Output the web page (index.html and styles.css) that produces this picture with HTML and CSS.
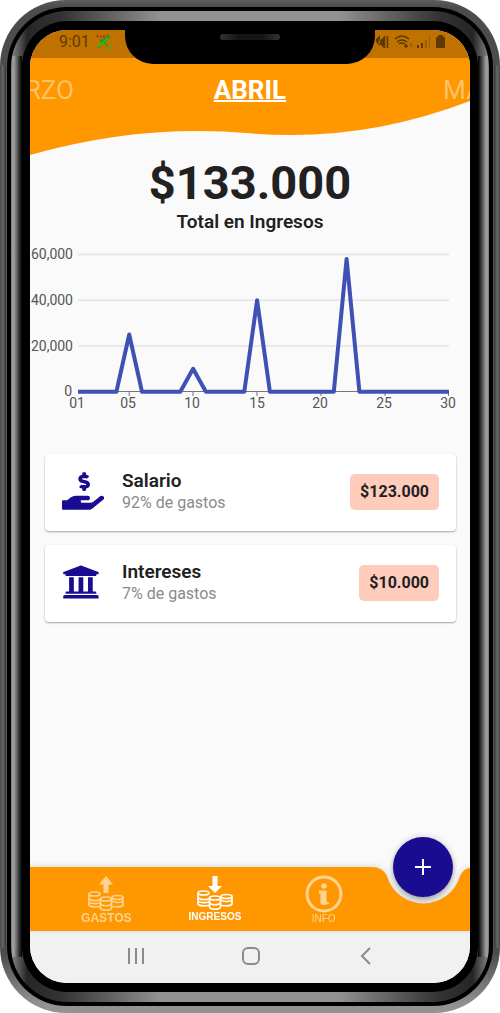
FILE: index.html
```html
<!DOCTYPE html>
<html lang="es">
<head>
<meta charset="utf-8">
<meta name="viewport" content="width=device-width, initial-scale=1">
<title>Ingresos</title>
<link rel="stylesheet" href="styles.css">
</head>
<body>
<div class="phone"><div class="rim"><div class="band"><div class="bezel">
<div class="screen">
  <div class="notch"><span class="speaker"></span></div>
  <header class="header">
    <svg class="wave" viewBox="0 0 440 125" preserveAspectRatio="none" aria-hidden="true">
      <path fill="#ff9800" d="M0 0H440V71Q330 113 220 103.3Q110 93.6 0 125Z"/>
    </svg>
    <div class="header-content">
      <div class="status">
        <span class="clock">9:01</span>
        <svg class="fake-gps" viewBox="0 0 16 16" aria-hidden="true">
          <path d="M1 4V1h2M1 2.500h1.500M4 4l1-3 1 3M7.500 1v3M10 1 8 2.500l2 1.500M13 1h-2v3h2" fill="none" stroke="#b63a12"/>
          <path d="M1 12l3-3 2 2-3 3zM10 4l3-3 2 2-3 3z" fill="#22a322"/>
          <path d="M5 9l5-4" stroke="#18a018" stroke-width="4"/>
          <path d="M4 5l8 7" stroke="#18a018" stroke-width="1.500"/>
          <path d="M5 10l6-5M2 12l3-2" stroke="#3bd04a"/>
          <path d="M10 14q5 0 5-4M11 16q4-1 4-4" fill="none" stroke="#5aa32a"/>
        </svg>
        <span class="status-space"></span>
        <svg class="signals" viewBox="0 0 72 16" aria-hidden="true">
          <g fill="#5e3a00">
            <path d="M0 5l4-4v11L0 8zM2 8l6 6V3zM62 3V1h5v2h2v11h-9V3zM41 11h2v3h-2zM45 9h2v5h-2z"/>
            <path d="M49 6h2v8h-2zM53 2h1v12h-1z" opacity=".35"/>
          </g>
          <g fill="none" stroke="#5e3a00" stroke-width="1.500">
            <path d="M9 2l-1 2 1 2-1 2 1 2-1 2 1 2M12 2l-1 2 1 2-1 2 1 2-1 2 1 2M19 5q7-6 14 0M21 8q5-4 10 0M23 10q3-2 6 0"/>
            <path d="M28 12h4m-2-2v4" />
            <path d="M35 9v4" opacity=".4"/>
          </g>
        </svg>
      </div>
      <nav class="months" aria-label="Mes">
        <a class="month previous" href="#marzo">MARZO</a>
        <a class="month current" href="#abril" aria-current="page">ABRIL</a>
        <a class="month next" href="#mayo">MAYO</a>
      </nav>
    </div>
  </header>

  <main class="content">
    <h1 class="total">$133.000</h1>
    <p class="caption">Total en Ingresos</p>

    <svg class="chart" viewBox="0 0 440 170" role="img" aria-label="Ingresos por día">
      <g stroke="#e3e3e3" stroke-width="1.500">
        <path d="M48 9.500H419M48 55.300H419M48 101H419"/>
      </g>
      <path d="M48 146.500H419M99.200 147v4M163 147v4M227 147v4M291 147v4M355 147v4M418.500 147v4" stroke="#777" fill="none"/>
      <path d="M48 146.700H86.400L99.200 89.500L112 146.700H150.300L163.100 123.800L175.900 146.700H214.300L227.100 55.200L239.900 146.700H303.800L316.600 14L329.400 146.700H419" fill="none" stroke="#3f51b5" stroke-width="4" stroke-linejoin="round"/>
      <g class="axis end">
        <text x="43" y="14">60,000</text><text x="43" y="60">40,000</text><text x="43" y="106">20,000</text><text x="42" y="151">0</text>
      </g>
      <g class="axis middle">
        <text x="47" y="163">01</text><text x="98" y="163">05</text><text x="162" y="163">10</text><text x="227" y="163">15</text><text x="290" y="163">20</text><text x="354" y="163">25</text><text x="418" y="163">30</text>
      </g>
    </svg>

    <ul class="cards">
      <li class="card">
        <svg class="icon" viewBox="0 0 576 512" aria-hidden="true"><path d="M271.060,144.300l54.270,14.300a8.590,8.590,0,0,1,6.630,8.100c0,4.600-4.090,8.400-9.120,8.400h-35.600a30,30,0,0,1-11.190-2.200c-5.240-2.200-11.280-1.700-15.300,2l-19,17.500a11.680,11.680,0,0,0-2.250,2.660,11.420,11.420,0,0,0,3.880,15.740,83.770,83.770,0,0,0,34.510,11.500V240c0,8.800,7.830,16,17.370,16h17.370c9.550,0,17.380-7.200,17.380-16V222.400c32.930-3.600,57.840-31,53.500-63-3.150-23-22.460-41.300-46.560-47.700L282.680,97.400a8.590,8.590,0,0,1-6.630-8.100c0-4.600,4.090-8.400,9.120-8.400h35.600A30,30,0,0,1,332,83.100c5.230,2.200,11.280,1.700,15.300-2l19-17.500A11.310,11.310,0,0,0,368.470,61a11.430,11.430,0,0,0-3.840-15.780,83.820,83.820,0,0,0-34.520-11.500V16c0-8.800-7.820-16-17.370-16H295.370C285.820,0,278,7.200,278,16V33.600c-32.890,3.600-57.850,31-53.510,63C227.630,119.600,247,137.900,271.060,144.300ZM565.270,328.100c-11.800-10.700-30.200-10-42.600,0L430.270,402a63.640,63.640,0,0,1-40,14H272a16,16,0,0,1,0-32h78.290c15.900,0,30.710-10.900,33.250-26.600a31.200,31.200,0,0,0,.46-5.460A32,32,0,0,0,352,320H192a117.660,117.660,0,0,0-74.100,26.290L71.400,384H16A16,16,0,0,0,0,400v96a16,16,0,0,0,16,16H372.770a64,64,0,0,0,40-14L564,377a32,32,0,0,0,1.280-48.900Z"/></svg>
        <div class="details"><h2 class="name">Salario</h2><p class="share">92% de gastos</p></div>
        <span class="amount">$123.000</span>
      </li>
      <li class="card">
        <svg class="icon" viewBox="0 0 568 512" aria-hidden="true"><path d="M496 128v16a8 8 0 0 1-8 8h-24v12c0 6.627-5.373 12-12 12H60c-6.627 0-12-5.373-12-12v-12H24a8 8 0 0 1-8-8v-16a8 8 0 0 1 4.941-7.392l232-88a7.996 7.996 0 0 1 6.118 0l232 88A8 8 0 0 1 496 128zm-24 304H40c-13.255 0-24 10.745-24 24v16a8 8 0 0 0 8 8h464a8 8 0 0 0 8-8v-16c0-13.255-10.745-24-24-24zM96 192v192H60c-6.627 0-12 5.373-12 12v20h416v-20c0-6.627-5.373-12-12-12h-36V192h-64v192h-64V192h-64v192h-64V192H96z"/></svg>
        <div class="details"><h2 class="name">Intereses</h2><p class="share">7% de gastos</p></div>
        <span class="amount">$10.000</span>
      </li>
    </ul>
  </main>

  <footer class="tabbar">
    <svg class="tabbar-shape" viewBox="0 0 440 64" preserveAspectRatio="none" aria-hidden="true">
      <path fill="#ff9800" d="M0 0H341Q353 0 357 9A38 38 0 0 0 430 9Q434 1 440 1V64H0Z"/>
    </svg>
    <nav class="tabs" aria-label="Secciones">
      <a class="tab gastos" href="#gastos">
        <svg class="coins" viewBox="0 0 36 37" aria-hidden="true">
          <path d="M18 1l7 8.500h-4.500V18h-5V9.500H11z" fill="currentColor"/>
          <g fill="none" stroke="currentColor" stroke-width="1.700">
            <ellipse cx="6.500" cy="19" rx="5.500" ry="2"/><path d="M1 19v11c1 2 7 2 11 1.500M1 23.500c1 2 8 3 11 1M1 27c2 2 8 2 11 1"/>
            <ellipse cx="18" cy="24" rx="5.500" ry="2"/><path d="M12.500 24v9c1 3 10 3 11 0V24M12.500 28.500c1 3 10 3 11 0"/>
            <ellipse cx="29.500" cy="22.500" rx="5.500" ry="2"/><path d="M35 22.500v7.500c-1 2-7 2-11 1.500M24 26c2 2 9 2 11 0"/>
          </g>
        </svg>
        <span>GASTOS</span>
      </a>
      <a class="tab ingresos" href="#ingresos" aria-current="page">
        <svg class="coins" viewBox="0 0 36 37" aria-hidden="true">
          <path d="M18 19l7-7h-4.500V2h-5v10H11z" fill="currentColor"/>
          <g fill="none" stroke="currentColor" stroke-width="1.700">
            <ellipse cx="6.500" cy="19" rx="5.500" ry="2"/><path d="M1 19v11c1 2 7 2 11 1.500M1 23.500c1 2 8 3 11 1M1 27c2 2 8 2 11 1"/>
            <ellipse cx="18" cy="24" rx="5.500" ry="2"/><path d="M12.500 24v9c1 3 10 3 11 0V24M12.500 28.500c1 3 10 3 11 0"/>
            <ellipse cx="29.500" cy="22.500" rx="5.500" ry="2"/><path d="M35 22.500v7.500c-1 2-7 2-11 1.500M24 26c2 2 9 2 11 0"/>
          </g>
        </svg>
        <span>INGRESOS</span>
      </a>
      <a class="tab info" href="#info">
        <svg class="info-icon" viewBox="0 0 38 38" aria-hidden="true">
          <circle cx="19" cy="19" r="17" fill="none" stroke="currentColor" stroke-width="3"/>
          <circle cx="19" cy="11" r="2.800" fill="currentColor"/>
          <path d="M14 15.500h7.500V26q0 1.500 2.500 1.500V29q-4 1-6 1-2.500 0-2.500-2.500V18.500H14z" fill="currentColor"/>
        </svg>
        <span>INFO</span>
      </a>
    </nav>
    <button class="add" type="button" aria-label="Añadir">
      <svg viewBox="0 0 16 16" aria-hidden="true"><path d="M8 0v16M0 8h16" stroke="#fff" stroke-width="2"/></svg>
    </button>
  </footer>

  <div class="system">
    <button class="key" type="button" aria-label="Recientes"><svg viewBox="0 0 20 20"><path d="M3 2v16M10 2v16M17 2v16"/></svg></button>
    <button class="key" type="button" aria-label="Inicio"><svg viewBox="0 0 20 20"><rect x="2" y="2" width="16" height="16" rx="5"/></svg></button>
    <button class="key" type="button" aria-label="Atrás"><svg viewBox="0 0 20 20"><path d="M14 2l-8 8 8 8"/></svg></button>
  </div>
</div>
</div></div></div></div>
</body>
</html>
```
FILE: styles.css
```css
* { box-sizing: border-box; }
body { margin: 0; background: #fff; font-family: Roboto, "Liberation Sans", sans-serif; color: #212121; }
h1, h2, p, ul { margin: 0; padding: 0; }
a { color: inherit; text-decoration: none; }

/* Phone frame */
.phone, .rim, .band, .bezel { display: flex; flex-direction: column; }
.rim, .band, .bezel, .screen { flex: 1; }
.phone {
  min-height: 100vh;
  padding: 7px;
  border-radius: 66px;
  background:
    linear-gradient(90deg, #4a4a4a, #666 3px, #333 6px, #777 7px) left center / 7px calc(100% - 130px) no-repeat,
    linear-gradient(270deg, #4a4a4a, #666 3px, #333 6px, #777 7px) right center / 7px calc(100% - 130px) no-repeat,
    linear-gradient(#5e5e5e, #4c4c4c 7px, #4c4c4c calc(100% - 60px), #929292 calc(100% - 8px));
}
.rim { padding: 4px; border-radius: 60px; background: #000; }
.band {
  padding: 10px 11px;
  border-radius: 56px;
  background:
    linear-gradient(90deg, #777, #a5a5a5 2px, #888 4px, #222 9px, #000 11px) left center / 11px calc(100% - 90px) no-repeat,
    linear-gradient(270deg, #777, #a5a5a5 2px, #888 4px, #222 9px, #000 11px) right center / 11px calc(100% - 90px) no-repeat,
    linear-gradient(90deg, #888, #262626 16px, #333 50px, #929292 150px, #929292 calc(100% - 150px), #333 calc(100% - 50px), #262626 calc(100% - 16px), #888);
}
.bezel { padding: 9px 8px; border-radius: 45px; background: #000; }
.screen {
  display: flex;
  flex-direction: column;
  position: relative;
  overflow: hidden;
  border-radius: 37px;
  background: #fafafa;
}
.notch {
  position: absolute;
  z-index: 2;
  top: 0;
  left: 50%;
  width: 250px;
  height: 34px;
  margin-left: -125px;
  padding-top: 4px;
  border-radius: 0 0 28px 28px;
  background: #000;
}
.speaker { display: block; width: 60px; height: 6px; margin: 0 auto; border-radius: 3px; background: linear-gradient(90deg, #333, #151515 30%, #151515 70%, #333); }

/* Header */
.header { display: grid; }
.wave, .header-content { grid-area: 1 / 1; width: 100%; }
.wave { height: 125px; }
.status { display: flex; align-items: center; height: 28px; padding: 0 20px 4px 29px; background: rgba(0, 0, 0, .25); }
.clock { font-size: 16px; line-height: 24px; color: #5e3a00; }
.fake-gps { width: 16px; height: 16px; margin-left: 6px; }
.status-space { flex: 1; }
.signals { width: 76px; height: 16px; }
.months { display: grid; grid-template-columns: 1fr auto 1fr; align-items: center; height: 64px; overflow: hidden; }
.month { font-size: 26px; line-height: 32px; color: #fff; }
.previous { justify-self: start; direction: rtl; width: 44px; white-space: nowrap; opacity: .4; }
.current { font-weight: 700; text-decoration: underline; text-decoration-thickness: 2px; text-underline-offset: 1px; }
.next { justify-self: end; width: 27px; white-space: nowrap; opacity: .4; }

/* Summary */
.content { flex: 1; }
.total { font-size: 47px; line-height: 56px; font-weight: 700; text-align: center; }
.caption { font-size: 19px; line-height: 22px; font-weight: 600; text-align: center; }
.chart { display: block; width: 100%; margin-top: 12px; }
.axis { font-size: 14px; fill: #555; }
.end { text-anchor: end; }
.middle { text-anchor: middle; }

/* Income list */
.cards { display: flex; flex-direction: column; gap: 14px; padding: 39px 14px 20px 15px; list-style: none; }
.card {
  display: flex;
  align-items: center;
  height: 77px;
  padding: 0 17px 2px;
  border-radius: 4px;
  background: #fff;
  box-shadow: 0 1px 2px rgba(0, 0, 0, .35);
}
.icon { width: 42px; height: 38px; margin-bottom: 2px; fill: #1a0c91; }
.details { flex: 1; padding-left: 18px; }
.name { font-size: 19px; line-height: 22px; font-weight: 600; }
.share { font-size: 16px; line-height: 22px; color: #8a8a8a; }
.amount { padding: 8px 10px; border-radius: 5px; background: #ffccbc; font-size: 16px; line-height: 20px; font-weight: 700; }

/* Bottom navigation */
.tabbar { display: grid; position: relative; filter: drop-shadow(0 -1px 3px rgba(0, 0, 0, .12)); }
.tabbar-shape, .tabs { grid-area: 1 / 1; width: 100%; height: 64px; }
.tabs { display: grid; grid-template-columns: repeat(3, 1fr); padding: 0 92px 0 22px; }
.tab { display: flex; flex-direction: column; align-items: center; justify-content: flex-end; padding-bottom: 7px; color: #ffd391; font-family: "Liberation Sans", Arial, sans-serif; font-size: 10px; line-height: 12px; }
.gastos { font-size: 12px; font-weight: 700; }
.ingresos { padding-bottom: 8px; color: #fff; font-weight: 700; }
.coins { width: 36px; height: 37px; }
.info { padding-bottom: 6px; }
.info-icon { width: 38px; height: 38px; }
.add {
  display: grid;
  place-items: center;
  position: absolute;
  top: -30px;
  right: 17px;
  width: 60px;
  height: 60px;
  padding: 0;
  border: 0;
  border-radius: 50%;
  background: #1a0c91;
  box-shadow: 0 3px 5px rgba(0, 0, 0, .3);
}
.add svg { width: 16px; height: 16px; }
.system { display: flex; justify-content: space-between; align-items: center; height: 52px; padding: 0 94px 2px 96px; background: #f1f1f1; }
.key { padding: 0; border: 0; background: none; }
.key svg { display: block; width: 20px; height: 20px; fill: none; stroke: #8b8b8b; stroke-width: 2; }
```
